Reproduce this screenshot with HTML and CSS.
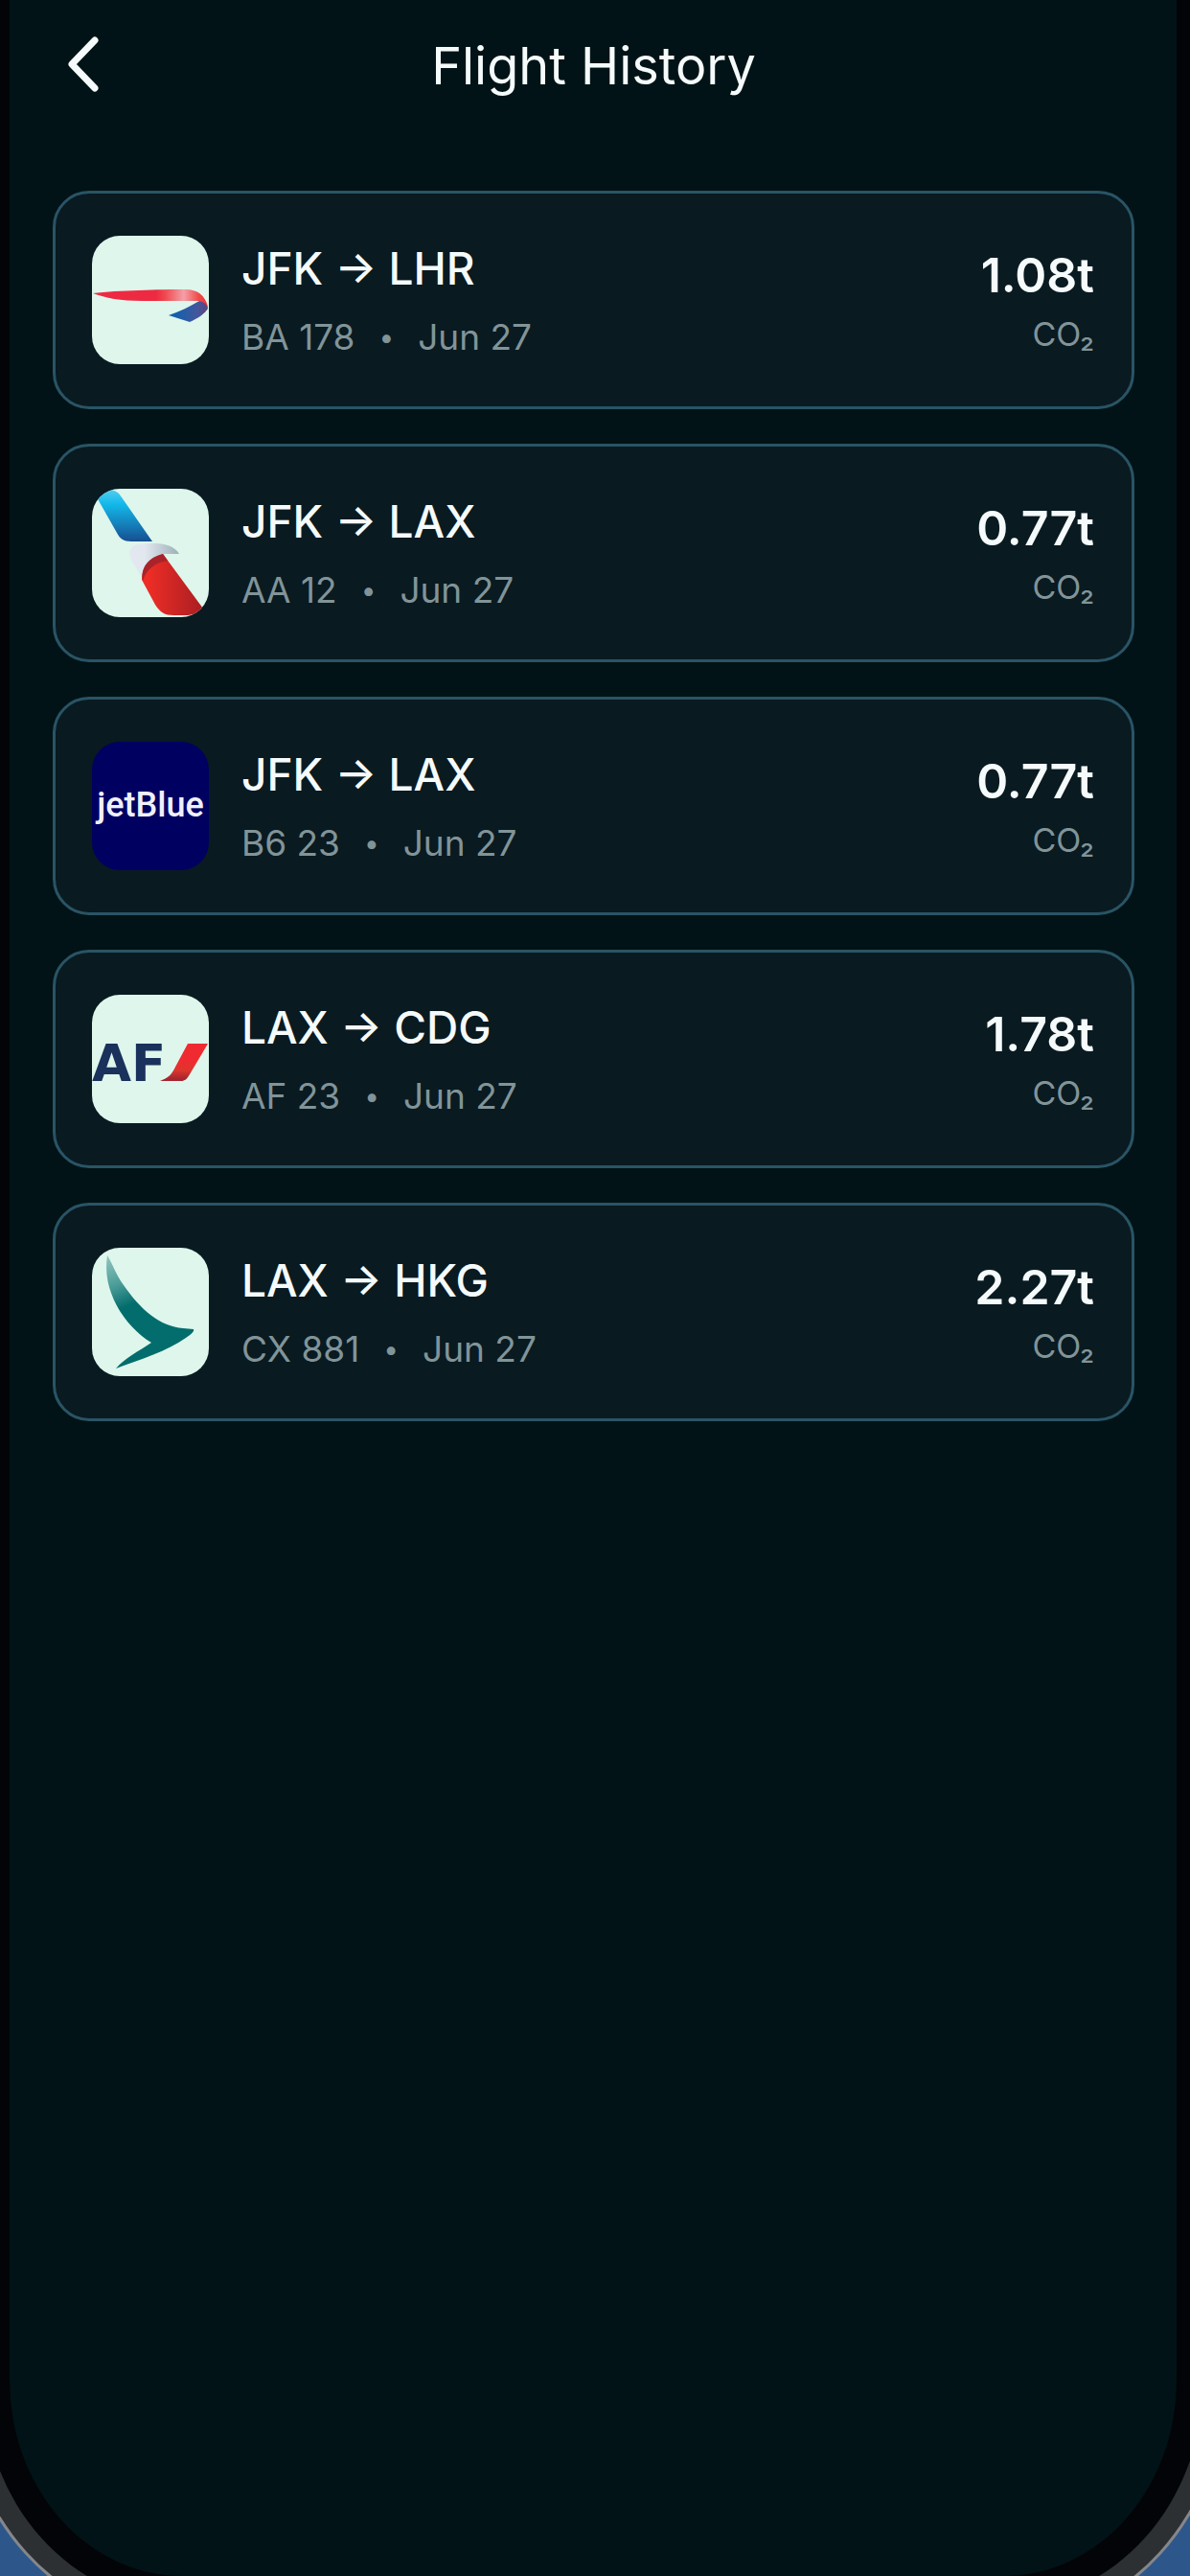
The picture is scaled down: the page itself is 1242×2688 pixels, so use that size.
FILE: index.html
```html
<!DOCTYPE html>
<html lang="en">
<head>
<meta charset="utf-8">
<meta name="viewport" content="width=device-width, initial-scale=1">
<title>Flight History</title>
<link rel="stylesheet" href="styles.css">
</head>
<body>
<main class="screen">
  <header class="topbar">
    <button class="back" type="button" aria-label="Back">
      <svg class="back-icon" viewBox="0 0 48 64" aria-hidden="true"><path d="M36 6 12 31l24 25"/></svg>
    </button>
    <h1 class="title">Flight History</h1>
  </header>

  <ul class="flights">
    <li class="flight">
      <svg class="logo" viewBox="0 0 122 134" role="img" aria-label="British Airways">
        <defs>
          <linearGradient id="ba-red" x1="0" x2="1"><stop offset=".55" stop-color="#ee2a42"/><stop offset=".63" stop-color="#f04a50"/><stop offset=".79" stop-color="#f3a0a8"/><stop offset=".92" stop-color="#f04a48"/><stop offset="1" stop-color="#ee3038"/></linearGradient>
          <linearGradient id="ba-blue" x1="0" x2="1"><stop offset=".2" stop-color="#1560ad"/><stop offset=".75" stop-color="#45569b"/><stop offset="1" stop-color="#5b4478"/></linearGradient>
        </defs>
        <path fill="url(#ba-red)" d="M1 60C28 57 70 56 98 56c12 0 20 6 23 18l-2 2-7-8H52C30 68 14 65 1 60z"/>
        <path fill="url(#ba-blue)" d="M80 83c12-4 22-9 32-15 4 1 8 3 9 8-3 5-10 10-19 14z"/>
      </svg>
      <div class="info">
        <h2 class="route">JFK → LHR</h2>
        <p class="meta"><span>BA 178</span><span class="dot">•</span><span>Jun 27</span></p>
      </div>
      <div class="emission"><strong class="amount">1.08t</strong><span class="unit">CO₂</span></div>
    </li>
    <li class="flight">
      <svg class="logo" viewBox="0 0 122 134" role="img" aria-label="American Airlines">
        <defs>
          <linearGradient id="aa-blue" x1="0" x2="0" y1="0" y2="1"><stop offset="0" stop-color="#50cdf0"/><stop offset=".28" stop-color="#12b8ea"/><stop offset="1" stop-color="#174f91"/></linearGradient>
          <linearGradient id="aa-gray" x1="0" x2="1"><stop offset=".3" stop-color="#e3e8f0"/><stop offset="1" stop-color="#9dafb8"/></linearGradient>
          <linearGradient id="aa-red" x1="0" x2="1"><stop offset=".1" stop-color="#ed2d26"/><stop offset="1" stop-color="#aa1e22"/></linearGradient>
        </defs>
        <path fill="url(#aa-blue)" d="M5 9 13 2c8-2 14 0 18 7l32 46H41c-8 0-12-3-15-9z"/>
        <path fill="url(#aa-gray)" d="M52 93 41 74c-4-8-1-15 7-16 18-2 36-2 43 10H76C62 71 52 80 52 93z"/>
        <path fill="url(#aa-red)" d="M74 68l42 57c-5 5-11 7-18 7H85c-9 0-14-3-19-11L52 95c0-15 9-23 22-27z"/>
        <path fill="#a9232a" d="M74 68l5 7C67 77 57 83 53 96c-3-15 8-25 21-28z"/>
      </svg>
      <div class="info">
        <h2 class="route">JFK → LAX</h2>
        <p class="meta"><span>AA 12</span><span class="dot">•</span><span>Jun 27</span></p>
      </div>
      <div class="emission"><strong class="amount">0.77t</strong><span class="unit">CO₂</span></div>
    </li>
    <li class="flight">
      <svg class="logo logo-navy" viewBox="0 0 122 134" role="img" aria-label="jetBlue">
        <text class="jetblue" x="61" y="78" text-anchor="middle">jetBlue</text>
      </svg>
      <div class="info">
        <h2 class="route">JFK → LAX</h2>
        <p class="meta"><span>B6 23</span><span class="dot">•</span><span>Jun 27</span></p>
      </div>
      <div class="emission"><strong class="amount">0.77t</strong><span class="unit">CO₂</span></div>
    </li>
    <li class="flight">
      <svg class="logo" viewBox="0 0 122 134" role="img" aria-label="Air France">
        <defs>
          <linearGradient id="af-red" x1="0" x2="0" y1="0" y2="1"><stop offset=".45" stop-color="#ef2b31"/><stop offset=".72" stop-color="#dc362d"/><stop offset=".95" stop-color="#a3252f"/></linearGradient>
        </defs>
        <text class="airfrance" x="0" y="90">AF</text>
        <path fill="url(#af-red)" d="M100 51h21l-19 32c-3 5-5 7-9 7H71c8-3 11-6 14-11z"/>
      </svg>
      <div class="info">
        <h2 class="route">LAX → CDG</h2>
        <p class="meta"><span>AF 23</span><span class="dot">•</span><span>Jun 27</span></p>
      </div>
      <div class="emission"><strong class="amount">1.78t</strong><span class="unit">CO₂</span></div>
    </li>
    <li class="flight">
      <svg class="logo" viewBox="0 0 122 134" role="img" aria-label="Cathay Pacific">
        <defs>
          <linearGradient id="cx-green" gradientUnits="userSpaceOnUse" x1="14" y1="10" x2="34" y2="62"><stop offset="0" stop-color="#8fc5bd"/><stop offset=".55" stop-color="#4b9d99"/><stop offset="1" stop-color="#036d6d"/></linearGradient>
        </defs>
        <path fill="url(#cx-green)" d="M16 8C22 18 25 28 33 39c18 26 38 43 62 45l11 1c1 2-2 5-8 9-20 14-46 22-73 32 9-11 24-18 37-27C33 81 10 44 16 8z"/>
      </svg>
      <div class="info">
        <h2 class="route">LAX → HKG</h2>
        <p class="meta"><span>CX 881</span><span class="dot">•</span><span>Jun 27</span></p>
      </div>
      <div class="emission"><strong class="amount">2.27t</strong><span class="unit">CO₂</span></div>
    </li>
  </ul>
</main>
</body>
</html>
```
FILE: styles.css
```css
* {
  box-sizing: border-box;
}

body {
  margin: 0;
  overflow-x: hidden;
  background: #2d578a;
  color: #f5fafa;
  font-family: Inter, Roboto, "Liberation Sans", sans-serif;
}

h1, h2, p, ul {
  margin: 0;
  padding: 0;
}

/* The rings around the screen are the phone's bezel and metal edge. */
.screen {
  min-height: 100vh;
  margin: 0 14px 0 10px;
  padding: 0 44px 48px 45px;
  background: #011316;
  border-radius: 0 0 180px 180px / 0 0 204px 204px;
  box-shadow: 0 0 0 28px #020408, 0 0 0 49px #2d3033, 0 0 0 52px #85878b;
}

.topbar {
  display: grid;
  grid-template-columns: 64px 1fr 64px;
  align-items: center;
  height: 136px;
}

.back {
  display: flex;
  padding: 0 0 0 8px;
  border: 0;
  background: none;
  color: inherit;
  cursor: pointer;
}

.back-icon {
  width: 48px;
  height: 64px;
  fill: none;
  stroke: currentColor;
  stroke-width: 7;
  stroke-linecap: round;
  stroke-linejoin: round;
}

.title {
  font-size: 54px;
  font-weight: 400;
  text-align: center;
}

.flights {
  display: flex;
  flex-direction: column;
  gap: 36px;
  padding-top: 63px;
  list-style: none;
}

.flight {
  display: flex;
  align-items: center;
  min-height: 228px;
  padding: 0 39px 0 38px;
  background: #091a21;
  border: 3px solid #295465;
  border-radius: 38px;
}

.logo {
  flex: none;
  width: 122px;
  height: 134px;
  border-radius: 29px;
  background: #def6eb;
}

.logo-navy {
  background: #000061;
}

.jetblue {
  fill: #f0f0fa;
  font-family: Roboto, sans-serif;
  font-size: 36px;
  font-weight: 500;
}

.airfrance {
  fill: #19315b;
  font-family: "DejaVu Sans", sans-serif;
  font-size: 53px;
  font-weight: 700;
}

.info {
  flex: 1;
  padding: 4px 0 0 34px;
}

.route {
  font-size: 46px;
  font-weight: 500;
  line-height: 56px;
}

.meta {
  display: flex;
  gap: 25px;
  margin-top: 18px;
  color: #819498;
  font-size: 37px;
  font-weight: 400;
  line-height: 52px;
}

.dot {
  font-size: 28px;
}

.emission {
  display: flex;
  flex-direction: column;
  align-items: flex-end;
  padding-top: 4px;
}

.amount {
  font-size: 50px;
  font-weight: 600;
  line-height: 60px;
}

.unit {
  margin-top: 8px;
  color: #819498;
  font-size: 34px;
  font-weight: 400;
  line-height: 48px;
}
```
